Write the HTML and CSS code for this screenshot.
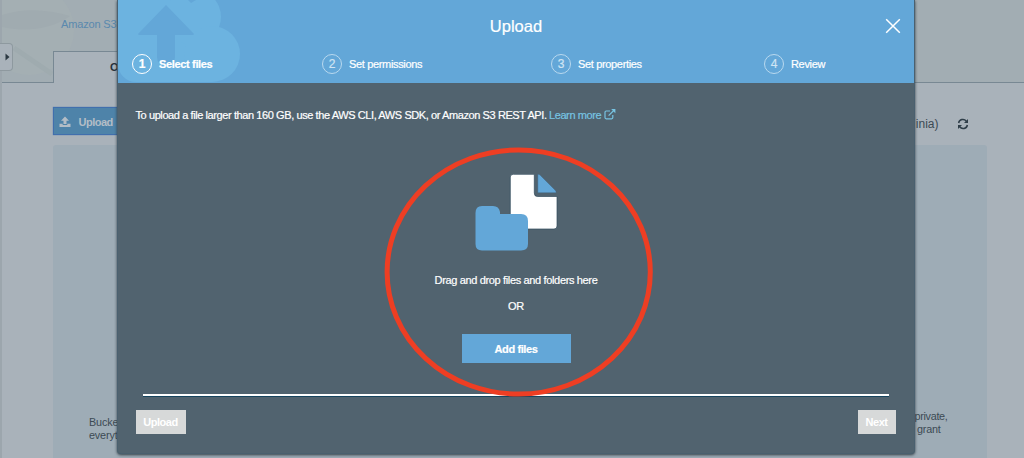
FILE: index.html
```html
<!DOCTYPE html>
<html lang="en">
<head>
<meta charset="utf-8">
<title>Amazon S3 - Upload</title>
<link rel="stylesheet" href="styles.css">
</head>
<body>
<div class="page">
  <header class="page-head">
    <svg class="head-art" width="90" height="82" viewBox="0 0 90 82" fill="none">
      <circle cx="27" cy="30" r="45" fill="#a4afb3"/>
      <path d="M0 15C20 8 45 9 68 16C50 30 20 32 0 27Z" fill="#a0abb0"/>
      <path d="M12 48L50 74" stroke="#9fabaf" stroke-width="5"/>
    </svg>
    <a class="crumb">Amazon S3</a>
    <div class="tabs"><div class="tab">O</div></div>
  </header>
  <main class="content">
    <div class="toolbar">
      <button class="page-upload">
        <svg width="12" height="12" viewBox="0 0 12 12" fill="#b3bdc6"><path d="M6 0.5L10 4.7H7.5V8H4.5V4.7H2Z"/><path d="M0.5 7.7H3.7V9H8.3V7.7H11.5V11H0.5Z"/></svg>
        Upload
      </button>
      <div class="region">
        <span class="region-name">inia)</span>
        <svg width="12" height="12" viewBox="0 0 12 12" fill="none" stroke="#2f3e49" stroke-width="1.5"><path d="M1.6 5A4.3 4.3 0 0 1 9.3 3.2M10.4 7A4.3 4.3 0 0 1 2.7 8.8"/><path d="M11 1V5H7ZM1 11V7H5Z" fill="#2f3e49" stroke="none"/></svg>
      </div>
    </div>
    <section class="panel">
      <p class="blurb">Bucke<br>everyt</p>
      <p class="blurb blurb-end">private,<br><span class="grant">grant</span></p>
    </section>
  </main>
</div>
<div class="drawer-handle"><svg width="5" height="8" viewBox="0 0 5 8"><path d="M0.5 0.5L4.5 4L0.5 7.5Z" fill="#2c3942"/></svg></div>

<div class="modal">
  <header class="modal-head">
    <svg class="cloud" width="130" height="83" viewBox="0 0 130 83">
      <g fill="#6cb3e0"><rect x="0" y="-20" width="90" height="102" rx="18"/><rect x="60" y="35" width="34" height="47"/><circle cx="75" cy="17" r="28"/><circle cx="94" cy="54" r="28"/></g>
      <path d="M48 5L76 34Q76 35 74 35H57V57Q57 65 48 65Q39 65 39 57V35H22Q20 35 20 34Z" fill="#63a7d8"/>
      <path d="M70 0H78L73 3Z" fill="#63a7d8"/>
    </svg>
    <div class="title-row">
      <h1 class="title">Upload</h1>
      <svg class="close" width="16" height="16" viewBox="0 0 16 16" stroke="#fff" stroke-width="1.5"><path d="M1.2 1.2L14.8 14.8M14.8 1.2L1.2 14.8"/></svg>
    </div>
    <ol class="steps">
      <li class="step active"><span class="num">1</span><span class="label">Select files</span></li>
      <li class="step"><span class="num">2</span><span class="label">Set permissions</span></li>
      <li class="step"><span class="num">3</span><span class="label">Set properties</span></li>
      <li class="step"><span class="num">4</span><span class="label">Review</span></li>
    </ol>
  </header>
  <div class="modal-body">
    <p class="hint"><span class="hint-text">To upload a file larger than 160 GB, use the AWS CLI, AWS SDK, or Amazon S3 REST API.</span><a class="learn">Learn more</a>
      <svg class="ext" width="12" height="11" viewBox="0 0 12 11" fill="none" stroke="#77c4e2" stroke-width="1.2"><path d="M6 2H2.2Q1 2 1 3.2V8.6Q1 9.8 2.2 9.8H7.6Q8.8 9.8 8.8 8.6V6M4.6 6.6L10 1.3"/><path d="M7.2 0H11.4V4.2Z" fill="#77c4e2" stroke="none"/></svg>
    </p>
    <div class="drop">
      <svg class="files-icon" width="83" height="77" viewBox="0 0 83 77">
        <path d="M38.3 .3H59.3V19Q59.3 22.5 62.3 22.5H82V52Q82 55 79 55H38.3Q35.3 55 35.3 52V3Q35.3 .3 38.3 .3Z" fill="#fff" stroke="#304b5c" stroke-width=".7"/>
        <path d="M62.8 0.2Q64.5 0.2 65.5 1.5L80 16Q81.2 17.3 81.2 18.8H62.8Z" fill="#63a7d8" stroke="#3e6078" stroke-width=".4"/>
        <path d="M7 32H18Q24 32 25 38V40H46Q53 40 53 47V70Q53 76.5 46 76.5H7Q.5 76.5 .5 70V39Q.5 32 7 32Z" fill="#63a7d8"/>
      </svg>
      <p class="drop-text">Drag and drop files and folders here</p>
      <p class="or">OR</p>
      <button class="add">Add files</button>
    </div>
    <hr class="rule">
    <footer class="foot"><button class="btn">Upload</button><button class="btn next">Next</button></footer>
  </div>
</div>
<svg class="mark" width="270" height="252" viewBox="0 0 270 252"><ellipse cx="134.7" cy="126" rx="131.6" ry="122.1" fill="none" stroke="#ee3e23" stroke-width="5"/></svg>
</body>
</html>
```
FILE: styles.css
```css
* { box-sizing: border-box; }
body { margin: 0; width: 1024px; height: 458px; overflow: hidden; position: relative; background: #a9b2ba; font-family: "Liberation Sans", Arial, sans-serif; font-size: 11px; color: #3c4a54; }
p, h1, ol { margin: 0; padding: 0; }
button { border: 0; font-family: inherit; padding: 0; }
.page { height: 458px; border-left: 2px solid #9ca6ad; }
.page-head { position: relative; height: 83px; padding: 17px 0 0 59px; background: #a2adb3; display: flex; flex-direction: column; border-bottom: 1px solid #788893; }
.head-art { position: absolute; left: 0; top: 0; }
.crumb { position: relative; color: #5a89ae; line-height: 15px; font-size: 11px; letter-spacing: -.15px; }
.tabs { position: relative; margin: 19px 0 -1px -8px; }
.tab { width: 130px; height: 32px; padding: 9px 0 0 56px; border: 1px solid #788893; border-bottom: 0; background: #a9b2ba; color: #25313a; font-weight: bold; line-height: 13px; }
.content { padding: 24px 37.5px 0 50.5px; }
.toolbar { display: flex; justify-content: space-between; height: 38px; }
.page-upload { width: 85px; height: 28px; display: flex; align-items: center; gap: 8px; padding: 2px 0 0 5px; background: #4e83a9; border: 1px solid #416fad; box-shadow: 0 0 1px #416fad; color: #b3bdc6; font-weight: bold; font-size: 11px; letter-spacing: -.5px; }
.region { display: flex; align-items: center; gap: 18px; height: 33px; padding-right: 18px; font-size: 12px; }
.panel { height: 315px; padding: 271px 39px 0 36.5px; display: flex; justify-content: space-between; border-radius: 3px; background: #9eacb6; }
.blurb { font-size: 10.8px; line-height: 13px; letter-spacing: -.15px; white-space: nowrap; }
.blurb-end { margin-top: -6px; letter-spacing: -.3px; }
.grant { padding-left: 2.5px; letter-spacing: -.2px; }
.drawer-handle { position: absolute; left: 0; top: 43px; width: 13px; height: 28px; border: 1px solid #8e999f; border-left: 0; border-radius: 0 4px 4px 0; background: #a9b2ba; display: flex; align-items: center; padding-left: 5px; }
.modal { position: absolute; left: 117px; top: 0; width: 798px; height: 454px; border-radius: 0 0 4px 4px; background: #51636f; box-shadow: 0 1px 3px #303d45; border: solid #4a606f; border-width: 0 1px 1px; color: #fff; }
.modal-head { position: relative; height: 83px; background: #63a7d8; overflow: hidden; }
.cloud { position: absolute; left: 0; top: 0; }
.title-row { position: relative; display: flex; justify-content: center; align-items: center; height: 52px; }
.title { font-size: 16.5px; font-weight: normal; line-height: 20px; -webkit-text-stroke: .2px #fff; }
.close { position: absolute; right: 13.5px; top: 18px; }
.steps { position: relative; list-style: none; display: grid; grid-template-columns: 190px 229px 213px 1fr; padding-left: 14px; }
.step { display: flex; align-items: center; gap: 7px; height: 23px; }
.num { width: 20px; height: 20px; border: 1.5px solid #b9d9ef; border-radius: 50%; color: #d0e5f4; font-size: 12px; line-height: 18px; text-align: center; -webkit-text-stroke: .2px; }
.active .num { border-color: #fff; color: #fff; font-weight: bold; }
.label { letter-spacing: -.34px; -webkit-text-stroke: .2px #fff; }
.active .label { font-weight: bold; letter-spacing: -.34px; }
.modal-body { padding: 25px 18.5px 0 17.5px; }
.hint { display: flex; height: 14px; line-height: 14px; white-space: nowrap; letter-spacing: -.41px; -webkit-text-stroke: .2px; }
.hint-text { width: 413.5px; }
.learn { width: 55px; color: #77c4e2; }
.ext { margin-top: 1px; }
.drop { display: flex; flex-direction: column; align-items: center; margin-top: 52px; padding-left: 1px; line-height: 14px; letter-spacing: -.35px; -webkit-text-stroke: .2px; }
.drop-text { margin-top: 22px; }
.or { margin-top: 12px; }
.add { margin-top: 21px; width: 109px; height: 29px; background: #63a7d8; color: #fff; font-weight: bold; font-size: 11px; letter-spacing: -.4px; }
.rule { margin: 31px 7px 0; height: 3px; border: 0; border-top: 2px solid #fff; background: #17455f; }
.foot { display: flex; justify-content: space-between; margin-top: 13px; }
.btn { width: 50px; height: 24px; background: #d7d9d9; color: #fff; font-weight: bold; font-size: 11px; letter-spacing: -.5px; }
.next { width: 38px; }
.mark { position: absolute; left: 384px; top: 146px; }
```
